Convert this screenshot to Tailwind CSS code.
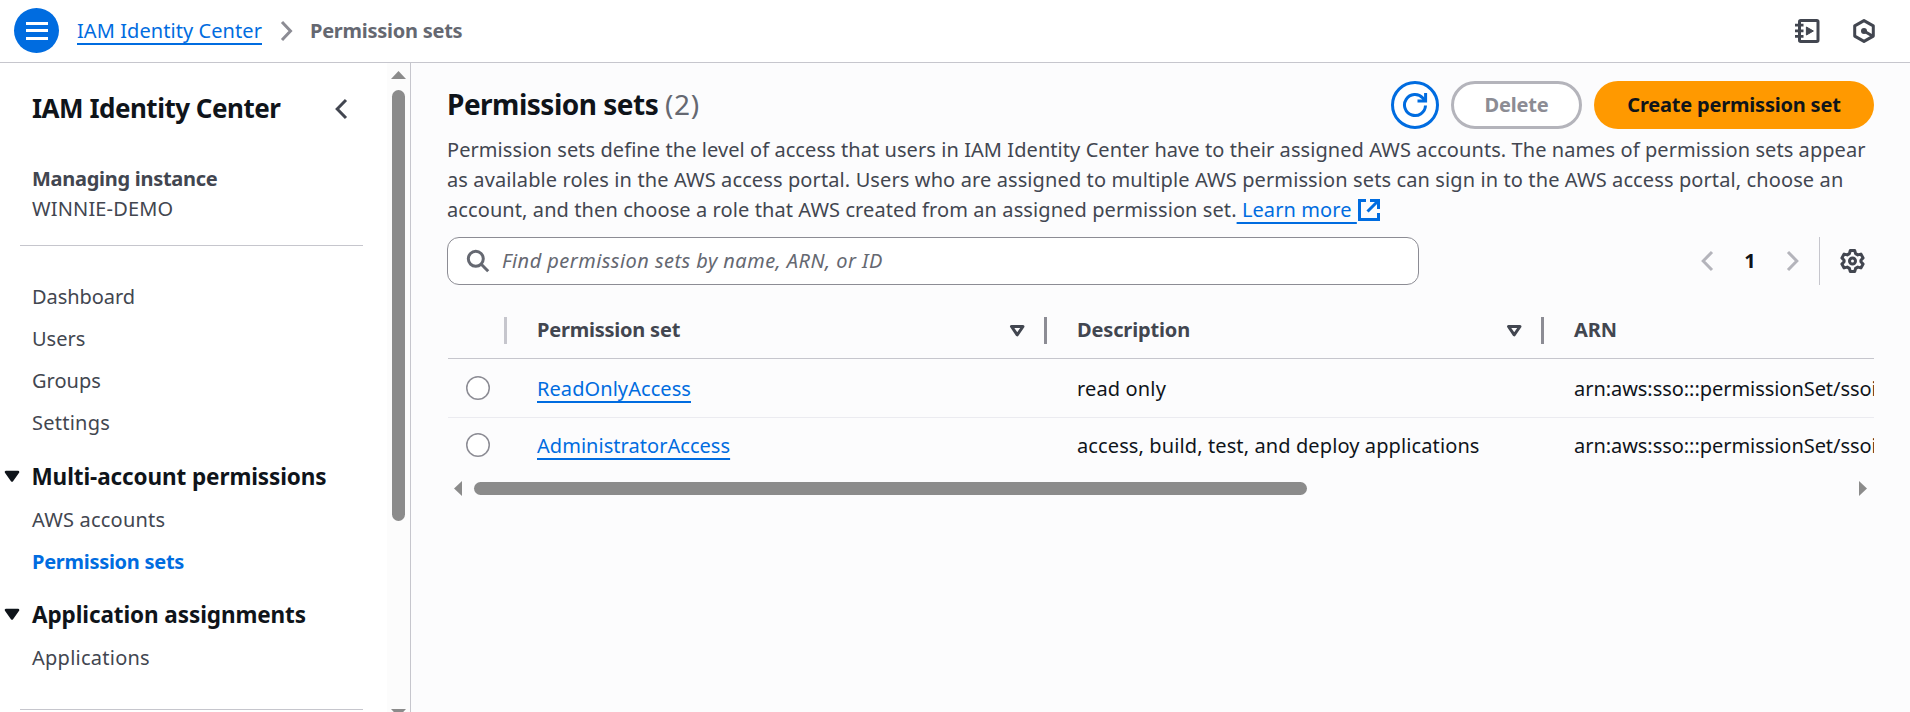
<!DOCTYPE html>
<html lang="en">
<head>
<meta charset="utf-8">
<title>Permission sets | IAM Identity Center</title>
<script src="https://cdn.jsdelivr.net/npm/@tailwindcss/browser@4"></script>
</head>
<body class="flex h-[712px] w-[1910px] flex-col overflow-hidden bg-white font-['Noto_Sans',sans-serif] text-[20px] leading-[30px] text-[#424650]">

<header class="flex h-[63px] shrink-0 items-start border-b border-[#c6c6cd] pl-[14px]">
  <button class="mt-2 flex size-[45px] items-center justify-center rounded-full bg-[#006ce0]" aria-label="Open navigation">
    <svg class="h-[45px] w-[45px]" viewBox="0 0 45 45" stroke="#fff" stroke-width="3"><path d="M12 15.5h22M12 22.5h22M12 30.5h22"/></svg>
  </button>
  <nav class="flex pt-[16px] pl-[18px]">
    <a class="w-[185px] whitespace-nowrap tracking-[0.07px] text-[#006ce0] underline decoration-2 underline-offset-[5px] [text-decoration-skip-ink:none]">IAM Identity Center</a>
    <svg class="mt-[4px] ml-[18px] h-[22px] w-[14px]" viewBox="0 0 14 22" fill="none" stroke="#8c8c94" stroke-width="3"><path d="M2 2l8.5 9L2 20"/></svg>
    <span class="ml-[16px] font-bold tracking-[-0.26px] text-[#656871]">Permission sets</span>
  </nav>
  <div class="mt-[18px] mr-[34px] ml-auto flex gap-[32px]">
    <svg class="h-[26px] w-[26px]" viewBox="0 0 26 26" fill="none" stroke="#424650" stroke-width="3"><rect x="5.5" y="2.5" width="18.5" height="21" rx="1.2"/><path d="M1 7.2h8.500M1 12.800h8.500M1 18.400h8.500" stroke-width="2.800"/><path d="M12.400 9v8l7-4z" fill="#424650" stroke="#424650" stroke-width="1"/></svg>
    <svg class="h-[26px] w-[24px]" viewBox="0 0 24 26" fill="none" stroke="#424650" stroke-width="3"><path d="M12 2.600l9.300 5.300v10.200L12 23.400l-9.300-5.300V7.900z" stroke-linejoin="round"/><circle cx="12" cy="13" r="3" fill="#424650" stroke="none"/><path d="M12 13l8 4.800"/></svg>
  </div>
</header>

<div class="flex min-h-0 flex-1">
  <aside class="flex w-[411px] shrink-0 border-r border-[#c6c6cd]">
    <div class="w-[387px] overflow-hidden">
      <div class="flex h-[101px] items-start pt-[27px] pl-[32px]">
        <h2 class="w-[303px] text-[26px] leading-[36px] font-bold tracking-[-0.5px] text-[#0f141a]">IAM Identity Center</h2>
        <svg class="mt-[8px] h-[22px] w-[14px]" viewBox="0 0 14 22" fill="none" stroke="#424650" stroke-width="3"><path d="M11 2L2.200 11 11 20"/></svg>
      </div>
      <div class="pl-[32px]">
        <p class="font-bold tracking-[-0.28px]">Managing instance</p>
        <p class="tracking-[0.15px]">WINNIE-DEMO</p>
      </div>
      <hr class="mt-[21px] ml-[20px] w-[343px] border-t border-[#c6c6cd]">
      <ul class="flex flex-col gap-3 pt-[36px] pl-[32px]">
        <li class="tracking-[-0.05px]">Dashboard</li>
        <li>Users</li>
        <li>Groups</li>
        <li class="tracking-[0.24px]">Settings</li>
      </ul>
      <section class="pt-[24px]">
        <h3 class="flex items-center text-[22.5px] leading-[30px] font-bold tracking-[-0.1px] text-[#0f141a]">
          <svg class="mr-[10.5px] ml-[4px] h-[14px] w-[17px]" viewBox="0 0 17 14"><path d="M2 2h12L8 10.500z" fill="#0f141a" stroke="#0f141a" stroke-width="2.600" stroke-linejoin="round"/></svg>Multi-account permissions</h3>
        <ul class="flex flex-col gap-3 pt-[13px] pl-[32px]">
          <li class="tracking-[0.2px]">AWS accounts</li>
          <li class="font-bold tracking-[-0.28px] text-[#006ce0]">Permission sets</li>
        </ul>
      </section>
      <section class="pt-[23px]">
        <h3 class="flex items-center text-[22.5px] leading-[30px] font-bold tracking-[-0.1px] text-[#0f141a]">
          <svg class="mr-[11px] ml-[4px] h-[14px] w-[17px]" viewBox="0 0 17 14"><path d="M2 2h12L8 10.500z" fill="#0f141a" stroke="#0f141a" stroke-width="2.600" stroke-linejoin="round"/></svg>Application assignments</h3>
        <ul class="pt-[13px] pl-[32px]">
          <li class="tracking-[0.25px]">Applications</li>
        </ul>
      </section>
      <hr class="mt-[36px] ml-[20px] w-[343px] border-t border-[#c6c6cd]">
    </div>
    <div class="flex w-[23px] flex-col items-center overflow-hidden bg-[#fcfcfc] pt-[8px]">
      <svg class="h-[8px] w-[15px] shrink-0" viewBox="0 0 15 8"><path d="M7.500 0L15 8H0z" fill="#8b8b8b"/></svg>
      <div class="mt-[11px] h-[431px] w-[13px] shrink-0 rounded-full bg-[#8b8b8b]"></div>
      <svg class="mt-[188px] h-[8px] w-[15px] shrink-0" viewBox="0 0 15 8"><path d="M7.500 8L15 0H0z" fill="#8b8b8b"/></svg>
    </div>
  </aside>

  <main class="min-w-0 flex-1 bg-[#fcfcfd] pr-[36px] pl-[36px]">
    <div class="flex h-[72px] items-start pt-[18px]">
      <h1 class="mt-[5px] flex-1 text-[28px] leading-[36px] font-bold tracking-[-0.5px] text-[#0f141a]">Permission sets <span class="font-normal tracking-[0.6px] text-[#656871]">(2)</span></h1>
      <button class="flex size-[48px] items-center justify-center rounded-full border-[3px] border-[#006ce0] bg-white" aria-label="Refresh">
        <svg class="h-[26px] w-[26px]" viewBox="0 0 26 26" fill="none" stroke="#006ce0" stroke-width="3"><path d="M23.500 13.500A10.500 10.500 0 1 1 20.800 6l2 2.500"/><path d="M23.600 1v8H15.500"/></svg>
      </button>
      <button class="ml-[12px] h-[48px] w-[131px] rounded-full border-[3px] border-[#b4b4bb] bg-white font-bold tracking-[-0.18px] text-[#8c8c94]">Delete</button>
      <button class="ml-[12px] h-[48px] w-[280px] rounded-full bg-[#ff9900] font-bold tracking-[-0.2px] text-[#0f141a]">Create permission set</button>
    </div>

    <p class="whitespace-nowrap">
      <span class="block tracking-[0.07px]">Permission sets define the level of access that users in IAM Identity Center have to their assigned AWS accounts. The names of permission sets appear</span>
      <span class="block tracking-[0.11px]">as available roles in the AWS access portal. Users who are assigned to multiple AWS permission sets can sign in to the AWS access portal, choose an</span>
      <span class="flex tracking-[0.09px]">account, and then choose a role that AWS created from an assigned permission set.<a class="whitespace-pre text-[#006ce0] underline decoration-2 underline-offset-[5px] [text-decoration-skip-ink:none]"> Learn more </a><svg class="mt-[3px] h-[24px] w-[24px]" viewBox="0 0 24 24" fill="none" stroke="#006ce0" stroke-width="3"><path d="M9 2.500H2.500v19h19V15M13 2.500h8.500V11M21 3L10.500 13.500"/></svg></span>
    </p>

    <div class="flex pt-[12px]">
      <div class="flex h-[48px] w-[972px] items-center rounded-[12px] border border-[#8c8c94] bg-white pl-[17.5px]">
        <svg class="h-[24px] w-[24px]" viewBox="0 0 24 24" fill="none" stroke="#656871" stroke-width="3"><circle cx="9.800" cy="9.800" r="7.500"/><path d="M15 15l7.200 7.200"/></svg>
        <span class="ml-[12.5px] tracking-[0.45px] whitespace-nowrap text-[#656871] italic">Find permission sets by name, ARN, or ID</span>
      </div>
      <div class="ml-auto flex items-center">
        <svg class="h-[22px] w-[14px]" viewBox="0 0 14 22" fill="none" stroke="#b4b4bb" stroke-width="3"><path d="M12 2L3.200 11 12 20"/></svg>
        <span class="w-[72px] text-center font-bold text-[#0f141a]">1</span>
        <svg class="h-[22px] w-[14px]" viewBox="0 0 14 22" fill="none" stroke="#b4b4bb" stroke-width="3"><path d="M2 2l8.800 9L2 20"/></svg>
        <div class="ml-[19px] h-[48px] w-px bg-[#c6c6cd]"></div>
        <svg class="mr-[9px] ml-[20px] h-[26px] w-[25px]" viewBox="0 0 25 26" fill="none" stroke="#424650" stroke-width="3" stroke-linejoin="round"><path d="M10.300 2.500h4.400l.9 3.100 2.200 1.300 3.100-.8 2.200 3.800-2.200 2.300v1.600l2.200 2.300-2.200 3.800-3.100-.8-2.200 1.300-.9 3.100h-4.400l-.9-3.100-2.200-1.300-3.100.8-2.200-3.800 2.200-2.300v-1.600L1.900 9.900l2.200-3.800 3.100.8 2.200-1.300z"/><circle cx="12.500" cy="13" r="3"/></svg>
      </div>
    </div>

    <div class="ml-px w-[1426px] overflow-hidden whitespace-nowrap">
      <div class="flex h-[74px] w-[1800px] items-start border-b border-[#c6c6cd] pt-[30px] font-bold">
        <div class="mt-[2px] ml-[56px] h-[27px] w-[3px] bg-[#c6c6cd]"></div>
        <div class="flex w-[537px] pl-[30px]">
          <span class="w-[472px] tracking-[-0.22px]">Permission set</span>
          <svg class="mt-[9px] h-[14px] w-[17px]" viewBox="0 0 17 14"><path d="M2.500 2.500h11.500L8.200 10.800z" fill="none" stroke="#424650" stroke-width="3" stroke-linejoin="round"/></svg>
        </div>
        <div class="mt-[2px] h-[27px] w-[3px] bg-[#8c8c94]"></div>
        <div class="flex w-[494px] pl-[30px]">
          <span class="w-[429px] tracking-[-0.15px]">Description</span>
          <svg class="mt-[9px] h-[14px] w-[17px]" viewBox="0 0 17 14"><path d="M2.500 2.500h11.500L8.200 10.800z" fill="none" stroke="#424650" stroke-width="3" stroke-linejoin="round"/></svg>
        </div>
        <div class="mt-[2px] h-[27px] w-[3px] bg-[#8c8c94]"></div>
        <span class="pl-[30px] tracking-[-0.07px]">ARN</span>
      </div>
      <div class="flex h-[59px] w-[1800px] items-start border-b border-[#ebebf0] pt-[15px] text-[#0f141a]">
        <svg class="mt-[2px] ml-[18px] size-[24px]" viewBox="0 0 24 24"><circle cx="12" cy="12" r="11.250" fill="#fff" stroke="#8c8c94" stroke-width="1.500"/></svg>
        <div class="w-[587px] pl-[47px]"><a class="tracking-[0.07px] text-[#006ce0] underline decoration-2 underline-offset-[5px] [text-decoration-skip-ink:none]">ReadOnlyAccess</a></div>
        <div class="w-[497px] tracking-[0.15px]">read only</div>
        <div class="tracking-[-0.05px]">arn:aws:sso:::permissionSet/ssoins-72238a1c5e0</div>
      </div>
      <div class="flex h-[57px] w-[1800px] items-start pt-[13px] text-[#0f141a]">
        <svg class="mt-[2px] ml-[18px] size-[24px]" viewBox="0 0 24 24"><circle cx="12" cy="12" r="11.250" fill="#fff" stroke="#8c8c94" stroke-width="1.500"/></svg>
        <div class="w-[587px] pl-[47px]"><a class="tracking-[0.04px] text-[#006ce0] underline decoration-2 underline-offset-[5px] [text-decoration-skip-ink:none]">AdministratorAccess</a></div>
        <div class="w-[497px] tracking-[0.11px]">access, build, test, and deploy applications</div>
        <div class="tracking-[-0.05px]">arn:aws:sso:::permissionSet/ssoins-72238a1c5e0</div>
      </div>
    </div>
    <div class="mt-[6px] flex h-[15px] items-center pr-[7px] pl-[7px]">
      <svg class="h-[15px] w-[8px]" viewBox="0 0 8 15"><path d="M8 0v15L0 7.500z" fill="#8b8b8b"/></svg>
      <div class="ml-[12px] h-[13px] w-[833px] rounded-full bg-[#8b8b8b]"></div>
      <svg class="ml-auto h-[15px] w-[8px]" viewBox="0 0 8 15"><path d="M0 0v15l8-7.500z" fill="#8b8b8b"/></svg>
    </div>
  </main>
</div>
</body>
</html>
